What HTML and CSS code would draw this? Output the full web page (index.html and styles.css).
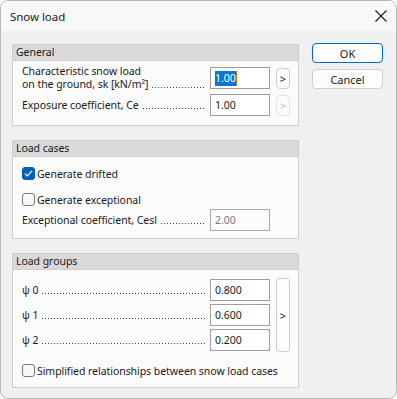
FILE: index.html
```html
<!DOCTYPE html>
<html>
<head>
<meta name="viewport" content="width=device-width, initial-scale=1">
<link rel="stylesheet" href="styles.css">
</head>
<body>
<div class="window">
  <div class="titlebar">
    <span class="title">Snow load</span>
    <svg class="close" width="12" height="12" viewBox="0 0 12 12">
      <path d="M0.5 0.5 L11.5 11.5 M11.5 0.5 L0.5 11.5" stroke="#1b1b1b" stroke-width="1.1" fill="none"/>
    </svg>
  </div>

  <div class="content">
    <div class="left">

      <div class="group">
        <div class="group-head">General</div>
        <div class="group-body">
          <div class="row">
            <div class="label">
              <div>Characteristic snow load</div>
              <div class="lead"><span>on the ground, sk [kN/m²]</span><span class="dots"></span></div>
            </div>
            <div class="field"><span class="sel">1.00</span><span class="caret"></span></div>
            <button class="more">&gt;</button>
          </div>
          <div class="row">
            <div class="label">
              <div class="lead"><span>Exposure coefficient, Ce</span><span class="dots purple"></span></div>
            </div>
            <div class="field">1.00</div>
            <button class="more" disabled>&gt;</button>
          </div>
        </div>
      </div>

      <div class="group">
        <div class="group-head">Load cases</div>
        <div class="group-body cases">
          <label class="check"><span class="box checked"><svg width="9" height="7" viewBox="0 0 9 7"><path d="M0.8 3.6 L3.3 6 L8.2 0.9" stroke="#fff" stroke-width="1.2" fill="none"/></svg></span>Generate drifted</label>
          <label class="check"><span class="box"></span>Generate exceptional</label>
          <div class="row">
            <div class="label">
              <div class="lead"><span>Exceptional coefficient, Cesl</span><span class="dots"></span></div>
            </div>
            <div class="field disabled">2.00</div>
            <div class="more-space"></div>
          </div>
        </div>
      </div>

      <div class="group">
        <div class="group-head">Load groups</div>
        <div class="group-body groups">
          <div class="psi">
            <div class="psi-rows">
              <div class="row">
                <div class="label"><div class="lead"><span>ψ 0</span><span class="dots"></span></div></div>
                <div class="field">0.800</div>
              </div>
              <div class="row">
                <div class="label"><div class="lead"><span>ψ 1</span><span class="dots"></span></div></div>
                <div class="field">0.600</div>
              </div>
              <div class="row">
                <div class="label"><div class="lead"><span>ψ 2</span><span class="dots"></span></div></div>
                <div class="field">0.200</div>
              </div>
            </div>
            <button class="more tall">&gt;</button>
          </div>
          <label class="check last"><span class="box"></span>Simplified relationships between snow load cases</label>
        </div>
      </div>

    </div>

    <div class="right">
      <button class="btn default">OK</button>
      <button class="btn">Cancel</button>
    </div>
  </div>
</div>
</body>
</html>
```

FILE: styles.css
```css
body {
  margin: 0;
  background: #ffffff;
  font-family: "Noto Sans", "Open Sans", sans-serif;
  font-size: 10.5px;
  letter-spacing: -0.05px;
  color: #1a1a1a;
}

.window {
  width: 397px;
  height: 399px;
  box-sizing: border-box;
  border: 1px solid #b9b9b9;
  border-radius: 8px;
  background: #f0f0f0;
  overflow: hidden;
}

.titlebar {
  height: 30px;
  background: #f8f8f8;
  display: flex;
  align-items: center;
  justify-content: space-between;
  padding: 0 9px 0 9px;
}

.title {
  font-size: 11.5px;
  color: #1b1b1b;
}

.content {
  display: flex;
  padding: 13px 0 0 11px;
}

.left {
  width: 287px;
  display: flex;
  flex-direction: column;
  gap: 14px;
}

.group {
  border: 1px solid #cfcfcf;
  background: #fbfbfb;
}

.group-head {
  background: #d9d9d9;
  border-bottom: 1px solid #cfcfcf;
  height: 15px;
  line-height: 15px;
  padding-left: 3px;
}

.group-body {
  padding: 6px 8px 9px 9px;
  display: flex;
  flex-direction: column;
  gap: 5px;
}

.row {
  display: flex;
  align-items: center;
  height: 22px;
}

.label {
  flex: 1;
  min-width: 0;
  line-height: 13px;
  margin-right: 4px;
}

.lead {
  display: flex;
  white-space: nowrap;
}

/* dot leader between label and field */
.lead .dots {
  flex: 1 1 0;
  min-width: 0;
  height: 1px;
  align-self: flex-end;
  margin: 0 0 3px 4px;
  background-image: linear-gradient(to right, #3a3a3a 1px, transparent 1px);
  background-size: 3px 1px;
  background-repeat: repeat-x;
}

.dots.purple {
  background-image: linear-gradient(to right, #4a2a9a 1px, transparent 1px);
}

.field {
  width: 60px;
  height: 22px;
  flex: none;
  box-sizing: border-box;
  border: 1px solid #9e9e9e;
  background: #ffffff;
  padding: 0 4px;
  display: flex;
  align-items: center;
}

.field.disabled {
  color: #7a7a7a;
  background: #fbfbfb;
  border-color: #a8a8a8;
}

.sel {
  background: #0078d7;
  color: #ffffff;
  line-height: 15px;
}

.caret {
  width: 1px;
  height: 15px;
  background: #e06c00;
}

.more {
  width: 14px;
  height: 21px;
  flex: none;
  margin-left: 6px;
  padding: 0;
  border: 1px solid #cccccc;
  border-radius: 4px;
  background: #fdfdfd;
  font-family: inherit;
  font-size: 11px;
  color: #1a1a1a;
}

.more:disabled {
  border-color: #e3e3e3;
  color: #c2c2c2;
  background: #fbfbfb;
}

.more-space {
  width: 14px;
  flex: none;
  margin-left: 6px;
}

.cases {
  gap: 0;
  padding-top: 10px;
  padding-bottom: 7px;
}

.check {
  display: flex;
  align-items: center;
  height: 13px;
  white-space: nowrap;
}

.cases .check {
  margin-bottom: 13px;
}

.cases .check + .check {
  margin-bottom: 3px;
}

.box {
  width: 11px;
  height: 11px;
  flex: none;
  border: 1px solid #7a7a7a;
  border-radius: 3px;
  background: #f7f7f7;
  margin-right: 2px;
  display: flex;
  align-items: center;
  justify-content: center;
}

.box.checked {
  background: #005fb8;
  border-color: #005fb8;
}

.groups {
  padding-top: 9px;
  padding-bottom: 10px;
  gap: 13px;
}

.psi {
  display: flex;
  align-items: stretch;
}

.psi-rows {
  flex: 1;
  min-width: 0;
  display: flex;
  flex-direction: column;
  gap: 3px;
}

.more.tall {
  height: auto;
  margin-top: -1px;
  margin-bottom: -1px;
}

.right {
  display: flex;
  flex-direction: column;
  gap: 6px;
  margin-left: 13px;
  margin-top: -1px;
}

.btn {
  width: 71px;
  height: 20px;
  padding: 0;
  border: 1px solid #cfcfcf;
  border-radius: 4px;
  background: #fdfdfd;
  font-family: inherit;
  font-size: 11px;
  color: #1a1a1a;
}

.btn.default {
  border-color: #0067c0;
}
```
